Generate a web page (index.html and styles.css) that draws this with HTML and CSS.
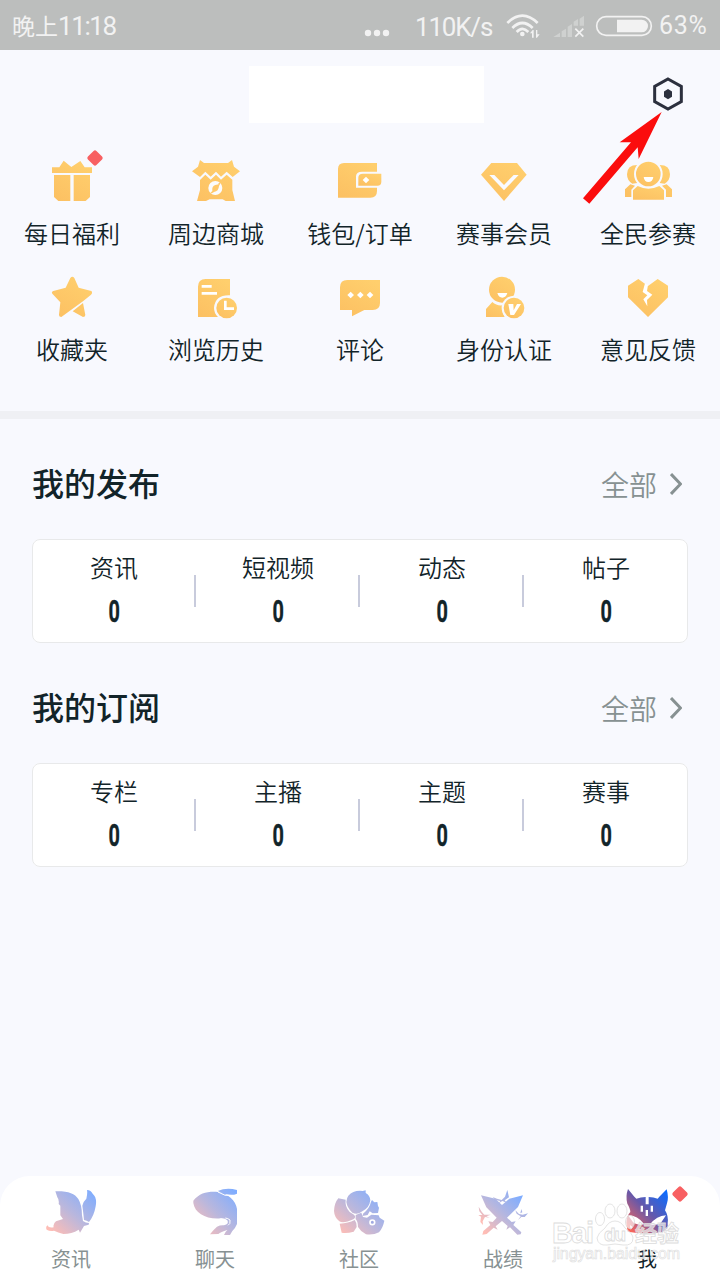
FILE: index.html
```html
<!DOCTYPE html>
<html lang="zh-CN">
<head>
<meta charset="utf-8">
<title>我</title>
<link rel="stylesheet" href="styles.css">
</head>
<body>
<svg class="defs" width="0" height="0" aria-hidden="true">
  <defs>
    <linearGradient id="gold" x1="0.8" y1="0" x2="0.2" y2="1"><stop offset="0" stop-color="#ffcf6d"/><stop offset="1" stop-color="#fcc163"/></linearGradient>
    <linearGradient id="tab" x1="0" y1="1" x2="1" y2="0"><stop offset="0.08" stop-color="#ffbdb5"/><stop offset="0.5" stop-color="#b9b7dd"/><stop offset="0.95" stop-color="#7fadff"/></linearGradient>
    <linearGradient id="tab-on" x1="0" y1="1" x2="1" y2="0"><stop offset="0.08" stop-color="#f8665a"/><stop offset="0.5" stop-color="#6758a9"/><stop offset="0.95" stop-color="#0b6cff"/></linearGradient>
  </defs>
</svg>
<div class="screen">
  <header class="status">
    <span class="time"><span class="period">晚上</span>11:18</span>
    <div class="status-right">
      <svg class="dots" viewBox="0 0 26 8"><circle cx="4" cy="4" r="3.2"/><circle cx="13" cy="4" r="3.2"/><circle cx="22" cy="4" r="3.2"/></svg>
      <span class="speed">110K/s</span>
      <svg class="signals" viewBox="435 30 447 90">
        <g fill="none" stroke="#f2f2f2" stroke-width="8">
          <path d="M442 66Q487 22 533 66M457 81Q487 51 518 81M470 93Q487 74 505 93"/>
          <rect x="710" y="47" width="164" height="56" rx="28" stroke-width="5"/>
          <path d="M646 83l24 24M670 83l-24 24" stroke-width="5"/>
        </g>
        <path fill="#f2f2f2" d="M480 99a7 7 0 1 0 14 0a7 7 0 1 0-14 0M771 56h74a19 19 0 0 1 0 38h-74zM516 110V97h-6l8-10h3v23zM528 87h4v13h7l-8 10h-3z"/>
        <path fill="#cfd1d0" d="M580 108l20-13v13zM605 91l13-8v25h-13zM623 77l13-8v39h-13zM641 62l13-8v20h-13zM659 53l13-9v30h-13z"/>
      </svg>
      <span class="battery">63%</span>
    </div>
  </header>

  <div class="profile">
    <div class="name-box"></div>
    <svg class="settings" viewBox="396 48 96 108"><path d="M444 57L484 79.500V124.500L444 147L404 124.500V79.500Z" fill="none" stroke="#2c303e" stroke-width="9"/><path d="M444 87l12 7.500v16L444 118l-12-7.500v-16z" fill="#2c303e"/></svg>
  </div>

  <nav class="menu">
    <a class="item"><svg viewBox="144 48 144 144"><path fill="url(#gold)" d="M156 82H178L191 62L214 81L241 63L254 82H276V99H156ZM162 105H211V183H175L162 171ZM221 105H270V171L257 183H221Z"/></svg><i class="badge"></i><span>每日福利</span></a>
    <a class="item"><svg viewBox="576 48 144 144"><path fill="url(#gold)" d="M600 60L612 69H684L696 60L702 80L720 94L698 111L680 95L663 110L648 95L632 110L616 95L600 111L576 94L594 80ZM600 120L616 104L632 119L648 104L663 119L680 104L697 119V150L705 183H677L668 178H629L618 183H591L600 150Z"/><circle cx="646" cy="144" r="21" fill="#fbfbfd"/><path d="M630 160l7-7q-2-15 9-18l10-2-1-3 8-4-4 8-2 4q-1 16-15 18l-6 4z" fill="#ffc869"/></svg><span>周边商城</span></a>
    <a class="item"><svg viewBox="228 48 144 144"><path fill="url(#gold)" d="M252 69H351V95H306Q288 95 288 109V143H351V153Q351 173 331 173H234V87Q234 69 252 69Z"/><path fill="url(#gold)" d="M309 101H364V125Q364 137 352 137H295V113Q295 101 309 101Z"/><path d="M318 110l10 10-10 10-10-10z" fill="#fff"/></svg><span>钱包/订单</span></a>
    <a class="item"><svg viewBox="660 48 144 144"><path fill="url(#gold)" d="M694 69H771L800 104L732 183L663 104Z"/><path fill="#f9faff" d="M688 105H703L732 135L761 105H776L732 151Z"/></svg><span>赛事会员</span></a>
    <a class="item"><svg viewBox="312 288 144 144"><g fill="url(#gold)"><path d="M352 315Q321 315 321 343Q321 362 337 371L352 369V330ZM419 315Q450 315 450 343Q450 362 434 371L419 369V330ZM315 388L331 373L345 377L334 389V411H315ZM456 388L440 373L426 377L438 389V411H456Z"/><circle cx="385" cy="342" r="40" stroke="#f8f9fe" stroke-width="6"/><path d="M353 378Q385 394 418 378L432 391V419H339V391Z"/></g><path d="M371 351H400Q398 366 385 366Q373 366 371 351Z" fill="#fff"/></svg><span>全民参赛</span></a>
    <a class="item"><svg viewBox="144 36 144 144"><path fill="url(#gold)" d="M211 54Q217 47 223 54L236 83L274 93Q279 98 273 104L249 124L184 171Q177 171 177 165L181 127L157 101Q153 96 160 93L197 83ZM218 154L249 129L256 165Q256 171 249 171Z"/></svg><span>收藏夹</span></a>
    <a class="item"><svg viewBox="576 36 144 144"><path fill="url(#gold)" d="M617 57H690V106Q646 104 642 143Q642 160 654 171H594V80Q594 57 617 57Z"/><circle cx="680" cy="144" r="31" fill="url(#gold)"/><path d="M605 79H635M605 100H651M676 122V146H702" fill="none" stroke="#fff" stroke-width="8"/></svg><span>浏览历史</span></a>
    <a class="item"><svg viewBox="228 36 144 144"><path fill="url(#gold)" d="M262 60H360V129Q360 150 338 150H313L276 169V150H240V82Q240 60 262 60Z"/><path d="M272 95l10 10-10 10-10-10zM301 95l10 10-10 10-10-10zM330 95l10 10-10 10-10-10z" fill="#fff"/></svg><span>评论</span></a>
    <a class="item"><svg viewBox="30 36 144 144"><circle cx="96" cy="89" r="39" fill="url(#gold)"/><path fill="url(#gold)" d="M48 147L67 126Q80 138 97 136Q94 154 104 171H48Z"/><circle cx="132" cy="144" r="37" fill="#f8f9fe"/><circle cx="132" cy="144" r="31" fill="url(#gold)"/><path d="M82 99H112Q108 113 97 113Q86 113 82 99ZM115 132H130L131 151L141 132H153L132 165H121Z" fill="#fff"/></svg><span>身份认证</span></a>
    <a class="item"><svg viewBox="462 36 144 144"><path fill="url(#gold)" d="M505 57L534 78L563 57L594 77V112L534 171L474 112V77Z"/><path d="M525 70L534 75L531 93L547 104L531 120L532 139L520 118L532 106L518 96Z" fill="#fff"/></svg><span>意见反馈</span></a>
  </nav>
  <div class="divider"></div>

  <section class="section">
    <div class="section-head"><h2>我的发布</h2><a class="all">全部<svg viewBox="0 0 12 22"><path d="M1 1l9.500 10L1 21"/></svg></a></div>
    <div class="card">
      <div class="stat"><span>资讯</span><b>0</b></div>
      <div class="stat"><span>短视频</span><b>0</b></div>
      <div class="stat"><span>动态</span><b>0</b></div>
      <div class="stat"><span>帖子</span><b>0</b></div>
    </div>
  </section>
  <section class="section">
    <div class="section-head"><h2>我的订阅</h2><a class="all">全部<svg viewBox="0 0 12 22"><path d="M1 1l9.500 10L1 21"/></svg></a></div>
    <div class="card">
      <div class="stat"><span>专栏</span><b>0</b></div>
      <div class="stat"><span>主播</span><b>0</b></div>
      <div class="stat"><span>主题</span><b>0</b></div>
      <div class="stat"><span>赛事</span><b>0</b></div>
    </div>
  </section>

  <footer class="tabs">
    <a class="tab"><svg viewBox="135 63 156 156"><path fill="url(#tab)" d="M166 79C205 78 224 86 235 102Q246 120 246 151L249 168Q257 174 267 174L266 179L252 183L240 203L236 194Q215 207 190 207Q174 203 162 197Q151 200 140 194Q136 187 142 181Q146 190 161 187Q158 177 168 169L189 162L181 151V122L176 117Q178 104 172 97ZM261 75Q273 76 278 86Q292 98 287 124Q282 153 267 171Q260 166 252 165Q250 143 247 122Q249 110 259 101Q263 86 261 75Z"/></svg><span>资讯</span></a>
    <a class="tab"><svg viewBox="567 63 156 156"><path fill="url(#tab)" d="M580 107C598 84 620 79 648 80C684 84 708 106 711 132V177Q706 190 697 198L690 210H672Q676 200 682 195Q662 201 655 207L630 208Q639 195 651 185Q661 180 672 181Q688 178 682 166Q674 158 662 160C620 164 584 145 580 114ZM653 78Q680 66 711 75V86Q689 96 653 78Z"/><path d="M663 160Q663 170 671 172M676 159Q684 160 690 165Q692 178 684 181M654 81Q674 95 698 92" fill="none" stroke="#fff" stroke-width="3"/></svg><span>聊天</span></a>
    <a class="tab"><svg viewBox="999 63 156 156"><path fill="url(#tab)" d="M1015 100L1037 104Q1034 124 1049 141L1062 149Q1070 156 1060 163Q1030 177 1018 169Q1003 157 1002 138Q1003 114 1015 100ZM1045 92Q1060 75 1088 78L1097 76L1097 84Q1110 91 1111 106Q1108 129 1087 139Q1073 151 1057 143Q1041 128 1039 111Q1040 98 1045 92ZM1116 105L1123 112L1132 111L1134 123L1137 128L1134 144L1118 145L1109 139L1103 150L1088 153L1089 146Q1109 130 1113 110ZM1019 176Q1045 175 1064 165Q1072 175 1070 186L1061 200Q1040 206 1025 203ZM1067 150L1084 143L1089 156L1101 158L1114 149L1136 151L1139 158L1153 167Q1149 188 1137 202Q1120 211 1098 208Q1082 200 1074 186Q1074 170 1067 162Z"/><circle cx="1117" cy="172" r="7" fill="#9fa9e1" stroke="#fff" stroke-width="5"/></svg><span>社区</span></a>
    <a class="tab"><svg viewBox="231 63 156 156"><g fill="url(#tab)"><path d="M243 91L286 101L306 120L328 101L369 91L354 126L321 158L335 171L347 169L340 180L364 202L362 208L352 209L330 187L319 194L323 183L306 168L287 184L293 194L281 188L260 207L247 209L250 198L271 180L265 169L278 171L290 158L259 127Z"/><path d="M278 96L291 101L305 105L315 95L322 75L327 97L314 106L320 113L307 108L294 116L301 108L286 105ZM236 125L245 140L253 149L272 149L259 154L269 158L255 156L248 169L249 180L241 171L243 155L235 150L247 150L238 139ZM346 136L357 147L368 149L384 145L374 156L364 156L354 165L362 154L350 146ZM364 132L367 142L361 145Z"/></g></svg><span>战绩</span></a>
    <a class="tab active"><svg viewBox="663 63 156 156"><path fill="url(#tab-on)" d="M684 72L703 95L709 101Q722 97 737 96V118H746V96Q761 97 773 101L778 95L800 73Q807 98 801 115L795 136Q806 152 803 175V190L789 200Q739 210 683 200L679 174Q680 152 691 141Q691 131 682 116Q676 94 684 72Z"/><path d="M722 122h7v18h-7zM737 135h7v18h-7zM752 122h7v18h-7zM684 151Q713 151 733 178Q704 183 695 166ZM798 151Q770 153 750 178Q779 184 788 166ZM690 180L698 187L692 194Z" fill="#fff"/></svg><i class="badge"></i><span>我</span></a>
  </footer>

  <svg class="arrow" viewBox="189 156 237 275"><path fill="#fb0d0d" d="M425 156L299 247L333 247L189 415L208 431L353 262L356 297Z"/></svg>

  <div class="watermark">
    <svg viewBox="0 0 136 66">
      <g class="mark">
        <g class="paw"><ellipse cx="50" cy="20" rx="4.500" ry="6.500"/><ellipse cx="60" cy="12" rx="5" ry="7"/><ellipse cx="72" cy="12" rx="5" ry="7"/><ellipse cx="80" cy="23" rx="4.500" ry="6.500"/><path d="M65 22Q71 22 75 29Q83 35 83 39Q83 47 73 46Q65 44 57 46Q48 47 47 39Q48 34 55 29Q59 22 65 22Z"/></g>
        <text x="2" y="44" class="bai" textLength="42">Bai</text>
        <text x="54" y="42" class="du" textLength="22">du</text>
        <text x="85" y="42" class="cn">经验</text>
        <text x="3" y="60" class="url" textLength="127">jingyan.baidu.com</text>
      </g>
    </svg>
  </div>
</div>
</body>
</html>
```
FILE: styles.css
```css
* { box-sizing: border-box; }
body {
  margin: 0;
  background: #f8f9fe;
  color: #122429;
  font-family: "Noto Sans CJK SC", "Noto Sans", sans-serif;
}
svg { display: block; }
.defs { position: absolute; }
.screen {
  position: relative;
  display: flex;
  flex-direction: column;
  width: 720px;
  height: 1280px;
  overflow: hidden;
}
.status {
  display: flex;
  align-items: center;
  justify-content: space-between;
  height: 50px;
  padding: 2px 12px 0;
  background: #bcbebd;
  color: #f2f2f2;
  font-family: Roboto, "Noto Sans CJK SC", sans-serif;
  font-size: 26px;
  line-height: 48px;
}
.time { padding-top: 2px; letter-spacing: -1.4px; }
.period { font-size: 23px; letter-spacing: 0; }
.status-right { display: flex; align-items: center; }
.dots { width: 26px; height: 8px; fill: #f2f2f2; margin: 13px 25px 0 0; }
.speed { width: 90px; padding-top: 2px; letter-spacing: -1.2px; }
.signals { width: 149px; height: 30px; }
.battery { width: 49px; margin-left: 5px; font-size: 25px; letter-spacing: .7px; }
.profile { display: flex; height: 98px; padding: 16px 36px 0 249px; justify-content: space-between; }
.name-box { width: 235px; height: 57px; background: #fff; }
.settings { width: 32px; height: 36px; margin-top: 10px; }
.menu {
  display: grid;
  grid-template-columns: repeat(5, 144px);
  grid-auto-rows: 116px;
  height: 263px;
  padding-top: 8px;
}
.item {
  position: relative;
  display: flex;
  flex-direction: column;
  align-items: center;
  font-size: 24px;
  font-weight: 350;
  line-height: 36px;
  white-space: nowrap;
}
.item svg { width: 48px; height: 48px; margin-bottom: 11px; }
.badge {
  position: absolute;
  top: -4px;
  left: 89px;
  width: 12px;
  height: 12px;
  border-radius: 2px;
  background: #f86062;
  transform: rotate(45deg);
}
.divider { height: 8px; background: #eff0f4; }
.section { height: 224px; padding: 39px 32px 0; }
.section-head { display: flex; justify-content: space-between; height: 81px; }
h2 { margin: 0; font-size: 32px; font-weight: 500; line-height: 48px; }
.all {
  display: flex;
  align-items: center;
  gap: 13px;
  height: 48px;
  padding: 3px 6px 0 0;
  color: #879192;
  font-size: 28px;
  font-weight: 350;
}
.all svg { width: 12px; height: 22px; margin-top: 0; fill: none; stroke: #879192; stroke-width: 3; }
.card {
  display: flex;
  height: 104px;
  outline: 1px solid #e8e9ea;
  outline-offset: -1px;
  border-radius: 8px;
  background: #fff;
}
.stat {
  display: flex;
  flex: 1;
  flex-direction: column;
  align-items: center;
  padding-top: 10px;
  font-size: 24px;
  font-weight: 350;
  line-height: 36px;
  background: linear-gradient(#c8cbdc, #c8cbdc) right 0 top 36px / 2px 32px no-repeat;
}
.stat:last-child { background: none; }
.stat b { font: 700 32px/44px Roboto, sans-serif; transform: scaleX(.62); -webkit-text-stroke: .4px #122429; margin-top: 4px; }
.tabs {
  display: grid;
  grid-template-columns: repeat(5, 144px);
  height: 104px;
  margin-top: auto;
  padding: 10px 0 0;
  border-radius: 30px 30px 0 0;
  background: #fff;
}
.tab {
  position: relative;
  display: flex;
  flex-direction: column;
  align-items: center;
  margin-left: -1px;
  margin-right: 1px;
  color: #879192;
  font-size: 20px;
  line-height: 30px;
}
.tab svg { width: 52px; height: 52px; margin-bottom: 6px; }
.tab .badge { top: 2px; left: 99px; }
.tab.active { color: #122429; }
.arrow { position: absolute; left: 583px; top: 112px; width: 79px; height: 91.7px; }
.watermark { position: absolute; left: 550px; top: 1199px; width: 136px; height: 66px; }
.mark { fill: rgba(255, 255, 255, .65); stroke: #dcdcdc; stroke-width: .8; font-family: "Liberation Sans", "Noto Sans CJK SC", sans-serif; }
.bai { font-size: 29px; font-weight: 700; }
.du { font-size: 19px; font-weight: 700; }
.cn { font-size: 22px; font-weight: 700; }
.url { font-size: 16px; stroke-width: .6; }
```
